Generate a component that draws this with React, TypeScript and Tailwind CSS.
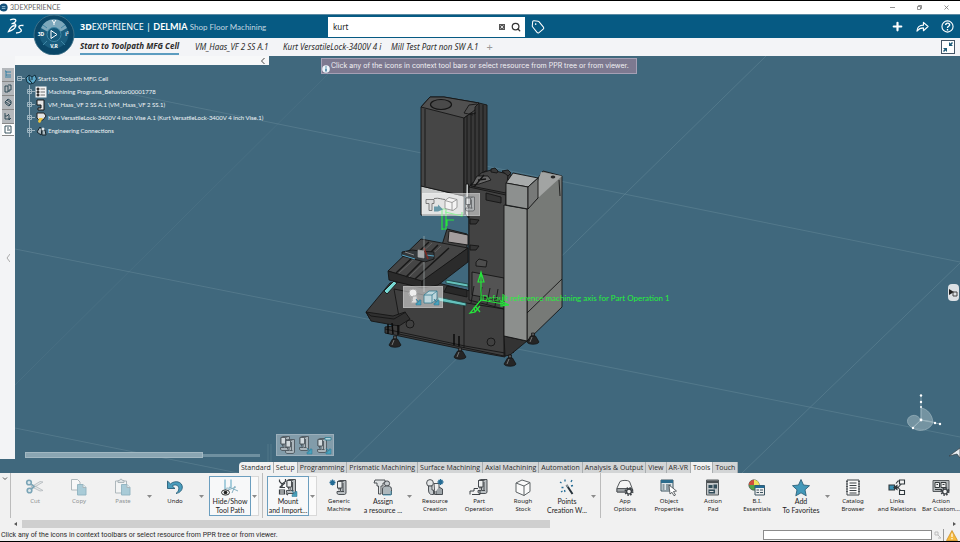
import React from "react";
import { Plus, Tag, Search } from "lucide-react";

type IconName =
  | "cut" | "copy" | "paste" | "undo" | "path" | "mount" | "generic" | "assign" | "resource"
  | "part" | "rough" | "points" | "app" | "object" | "pad" | "bi" | "star" | "catalog" | "links" | "bar";

const Machine = ({ x = 0, y = 0 }: { x?: number; y?: number }) => (
  <g transform={`translate(${x} ${y})`} stroke="#3d4246" strokeWidth=".9" strokeLinejoin="round">
    <path d="M1 1.500 3 .5h6.500v13l-1.500 1H2l-1.500-1v-2H4V8H1z" fill="#b9bec1" />
    <path d="M1 1.500h4.500V8H1zM5.500 1.500 7.500.8" fill="#eceeef" />
    <path d="M6.500 3v9M4.500 11.500h3" fill="none" />
    <path d="M2.500 8v2.500" fill="none" />
  </g>
);

const Gear = ({ x, y }: { x: number; y: number }) => (
  <g transform={`translate(${x} ${y})`}>
    <circle r="3.600" fill="none" stroke="#3c4145" strokeWidth="1.800" strokeDasharray="1.500 1.330" />
    <circle r="2.400" fill="#f1f1f1" stroke="#3c4145" strokeWidth="1.400" />
  </g>
);

const Spark = ({ x, y }: { x: number; y: number }) => (
  <path transform={`translate(${x} ${y})`} d="M0-3V3M-3 0H3M-2-2 2 2M2-2-2 2" stroke="#246b94" strokeWidth="1.300" />
);

const DownArrow = ({ x, y }: { x: number; y: number }) => (
  <path transform={`translate(${x} ${y})`} d="M0 0 3 3V1h2v5H0V4h2z" fill="#4aa3bd" stroke="#28718c" strokeWidth=".5" />
);

const icons: Record<IconName, React.ReactNode> = {
  cut: (
    <g strokeWidth="1.200">
      <path d="M6.500 6 18 12.500l-3 .5-9-4.500zM6.500 11 18 4l-3-.5-9 5.500z" fill="#e4e7e8" stroke="#b3b9bc" strokeWidth=".8" />
      <g fill="#dfe9ed" stroke="#7ba5b7" strokeWidth="1.600">
        <circle cx="4" cy="4.500" r="2.300" />
        <circle cx="4.500" cy="12.500" r="2.300" />
        <path d="m6 6 3 2.500L6.500 11" fill="none" />
      </g>
    </g>
  ),
  copy: (
    <g stroke="#a6b1b6" strokeWidth=".9">
      <path d="M2.500 1.500h6l2.500 2.500v8H2.500z" fill="#f7f8f8" />
      <path d="M8.500 6.500h5.500l3 3v7.500H8.500z" fill="#a9cbd7" stroke="#8fb2c0" />
      <path d="M14 6.500v3h3" fill="#e6f0f3" />
    </g>
  ),
  paste: (
    <g stroke="#a6b1b6" strokeWidth=".9">
      <path d="M2.500 3h11v12h-11z" fill="#f3f4f4" />
      <path d="M5 4.500V2.500h1.500c0-1.800 3-1.800 3 0H11v2z" fill="#dfe3e5" />
      <path d="M8.500 6.500h5.500l3 3v7.500H8.500z" fill="#a9cbd7" stroke="#8fb2c0" />
      <path d="M14 6.500v3h3" fill="#e6f0f3" />
    </g>
  ),
  undo: (
    <path d="M2.500 3v7.500H10L7.300 8C10 5.800 13.800 7.200 13.800 10.500c0 2.200-1 3.500-2.800 5 4-.7 6.300-3.300 6.300-6.400 0-5.400-7.300-7.200-11.800-3.200z" fill="#4a9dbd" stroke="#285f79" strokeWidth=".9" strokeLinejoin="round" />
  ),
  path: (
    <g fill="none" strokeWidth="1">
      <path d="M5 1.500v10M11 1.500v8" stroke="#57a3c0" />
      <path d="M5 12c2-4 4 0 6-3M8 12l8-3M9 9l9 4M12 15l3-7" stroke="#86b2c3" />
      <ellipse cx="5.500" cy="14.500" rx="4" ry="2.600" fill="#eee" stroke="#333" />
      <circle cx="5.500" cy="14.500" r="1.800" fill="#222" />
    </g>
  ),
  mount: (
    <>
      <Machine x={8} y={1} />
      <g fill="none" stroke="#3d4246" strokeWidth="1.200">
        <path d="M1.500 1.500v2L4 6v3.500M7.500 1v2.500L4 6M2 9.500h5M1.500 12h5v4h-5zM1.500 14h5M8 15.500l2 1.500" />
        <path d="M1.500 9.500 7 5" />
      </g>
      <DownArrow x={14} y={12.500} />
    </>
  ),
  generic: <><Machine x={7.500} y={2} /><Spark x={3.500} y={4.500} /></>,
  assign: (
    <g stroke="#3d4246" strokeWidth=".9" strokeLinejoin="round">
      <path d="M2 2h10v3h-2v3H8v8H5.500V8H4V5H1z" fill="#dfe2e3" />
      <circle cx="14" cy="5.500" r="2.600" fill="#c7cccf" />
      <path d="M9.500 16.500V11c0-2 1.500-3 4-3h1.500c2.500 0 3.500 1.500 3.500 3.500v5z" fill="#aeb7bb" />
      <path d="M10 17h8v-4" stroke="#4a9dbd" fill="none" />
    </g>
  ),
  resource: (
    <g stroke="#3d4246" strokeWidth=".9">
      <circle cx="5" cy="5" r="3.400" fill="#e5e7e8" />
      <path d="M3.500 8v4c0 3 1.500 4.500 3 4.500h2V12H7V8z" fill="#c4c9cc" />
      <path d="M9 5.500h5v11H9.500v-4z" fill="#eee" />
      <path d="m14 9 3.500 2v5.500H11V13" fill="#9ea5a9" />
      <Spark x={15.5} y={4} />
    </g>
  ),
  part: (
    <><Machine x={8.500} y={1} /><path d="M1 16.500V13h4v-2.500h4M3 16.500h8V13" fill="none" stroke="#3d4246" /></>
  ),
  rough: (
    <path d="m3 5 6-3 8 2.500v9L11 17.500 3 14zM3 5l8 3v9.500M11 8l6-3.500" fill="#fafafa" stroke="#5d6265" strokeWidth="1" strokeLinejoin="round" />
  ),
  points: (
    <g>
      <path d="m9.500 7 6 9" stroke="#26323a" strokeWidth="2" />
      <path d="m9.500 7 1.500 2" stroke="#8b969c" strokeWidth="2" />
      <path d="M8 1.500v2M3 4l1.500 1M15 2l-1 2M4.500 9.500h2M4 14l1.500-1M16 7.500l-2 .5M7.500 12l.5 2" stroke="#246b94" strokeWidth="1.300" />
    </g>
  ),
  app: (
    <><path d="M2 10 5 3.500C7 2 13 2 14.500 3.500L17 10v4H2z" fill="#f5f5f5" stroke="#55595c" />
      <path d="M2 10.500h15V14H2z" fill="#9da2a5" stroke="#55595c" /><Gear x={14} y={13.500} /></>
  ),
  object: (
    <g>
      <path d="M2 2h12v11H2z" fill="#dce3e6" stroke="#3d5561" />
      <path d="M2 2h12v3H2z" fill="#2d6c8c" />
      <path d="M3.500 7h2M7 7h5M3.500 9h2M7 9h4M3.500 11h2M7 11h3" stroke="#3d5561" />
      <path d="m10 7 7.500 6-3 .5 2 3.500-1.500.8-2-3.500L11 16z" fill="#fff" stroke="#3d4246" strokeWidth=".8" />
    </g>
  ),
  pad: (
    <g>
      <path d="M3.500 2h12v15h-12z" fill="#c3c7c9" stroke="#555a5d" />
      <path d="M4 2.500h11V5H4z" fill="#4a4f52" />
      <path d="M5.500 7h4v3h-4zM10.500 6.500h3.500v4h-3.500zM5.500 11.500h6.500v4H5.500z" fill="#334d5a" />
      <path d="M6.500 13.500h4" stroke="#ddd" />
    </g>
  ),
  bi: (
    <g>
      <circle cx="7" cy="7" r="5.200" fill="#51a447" stroke="#4b5559" strokeWidth=".7" />
      <path d="M7 7V1.800A5.200 5.200 0 0 1 12.200 7z" fill="#eee25c" />
      <path d="M7 7H1.800A5.200 5.200 0 0 1 7 1.800z" fill="#cf4d3d" />
      <path d="M8 7.500h9.500v9.500H8z" fill="#eee" stroke="#3d5561" />
      <path d="M8 7.500h9.500V10H8z" fill="#246b94" />
      <path d="M9.500 12H12M13 12h3M9.500 14.500H12M13 14.500h3" stroke="#3d5561" strokeWidth="1.200" />
    </g>
  ),
  star: (
    <path d="m10 1.500 2.500 5.500 6 .7-4.500 4.100 1.200 6L10 14.800l-5.200 3 1.200-6L1.500 7.700l6-.7z" fill="#4399ba" stroke="#2d627b" strokeWidth=".9" />
  ),
  catalog: (
    <g stroke="#3d4246">
      <path d="M4 2h12v15H4z" fill="#fafafa" />
      <path d="M3 3.500h2M3 6h2M3 8.500h2M3 11h2M3 13.500h2M15 3.500h2M15 6h2M15 8.500h2M15 11h2M15 13.500h2" strokeWidth=".8" />
      <path d="M6.500 5h7M6.500 7.500h7M6.500 10h7M6.500 12.500h7M6.500 15h7" />
    </g>
  ),
  links: (
    <g fill="none" stroke="#30383c" strokeWidth="1.100">
      <path d="M7 9.500h4L16 4M11 9.500l4 4.500M9 5.500 11 3h2" />
      <path d="M2 7h5.500v5H2z" fill="#398eb0" />
      <path d="M12.500 2h5v4h-5zM12.500 12.500h5v4h-5z" fill="#f5f5f5" />
      <path d="m7 9.500 3-2v4z" fill="#30383c" />
    </g>
  ),
  bar: (
    <><path d="M2 2.500h16v11H2z" fill="#b5b9bb" stroke="#55595c" />
      <path d="M4 4.500h4.500v5H4zM10 4.500h5v5h-5z" fill="#eee" stroke="#33383b" />
      <path d="M5.500 6.500h1.500M11.500 6.500h2M4 11.500h7" stroke="#33383b" /><Gear x={14} y={13.500} /></>
  ),
};

type Item = { icon: IconName; label: [string, string?]; menu?: boolean; off?: boolean; boxed?: boolean; end?: boolean };

const items: Item[] = [
  { icon: "cut", label: ["Cut"], off: true },
  { icon: "copy", label: ["Copy"], off: true },
  { icon: "paste", label: ["Paste"], off: true, menu: true },
  { icon: "undo", label: ["Undo"], menu: true },
  { icon: "path", label: ["Hide/Show", "Tool Path"], menu: true, boxed: true, end: true },
  { icon: "mount", label: ["Mount", "and Import..."], menu: true, boxed: true },
  { icon: "generic", label: ["Generic", "Machine"] },
  { icon: "assign", label: ["Assign", "a resource ..."], menu: true },
  { icon: "resource", label: ["Resource", "Creation"] },
  { icon: "part", label: ["Part", "Operation"] },
  { icon: "rough", label: ["Rough", "Stock"] },
  { icon: "points", label: ["Points", "Creation W..."], menu: true, end: true },
  { icon: "app", label: ["App", "Options"] },
  { icon: "object", label: ["Object", "Properties"] },
  { icon: "pad", label: ["Action", "Pad"] },
  { icon: "bi", label: ["B.I.", "Essentials"] },
  { icon: "star", label: ["Add", "To Favorites"], menu: true },
  { icon: "catalog", label: ["Catalog", "Browser"] },
  { icon: "links", label: ["Links", "and Relations"] },
  { icon: "bar", label: ["Action", "Bar Custom..."] },
];

function RibbonItem({ item }: { item: Item }) {
  const tall = item.menu && item.label[1];
  return (
    <>
      <div className={`flex shrink-0 ${item.boxed ? "pl-1" : ""}`}>
        <button
          className={`flex h-10 flex-col items-center border pt-px whitespace-nowrap ${item.boxed ? "w-[42px] border-[#6b9ebf] bg-[#f7f8f9]" : "w-11 border-transparent"} ${item.off ? "text-[#8f9395]" : "text-[#222]"}`}
        >
          <svg viewBox="0 0 20 19" className="h-[19px] w-5 shrink-0">{icons[item.icon]}</svg>
          <span className={`flex flex-col ${tall ? "font-['Lato',sans-serif] text-[7px] leading-[9px]" : "text-[6px] leading-[8px]"}`}>
            {item.label.map((l) => <span key={l}>{l}</span>)}
          </span>
        </button>
        {item.menu && (
          <button aria-label={`${item.label[0]} options`} className={`flex h-10 w-2 items-center justify-center ${item.boxed ? "border-y border-r border-[#d8d8d8] bg-[#fafafa]" : ""}`}>
            <svg viewBox="0 0 5 3" className="h-[3px] w-[5px]"><path d="M0 0h5L2.500 3z" fill="#8b8b8b" /></svg>
          </button>
        )}
      </div>
      {item.end && <div className={`ml-[3px] h-[45px] w-px shrink-0 self-start bg-[#bcbcbc] ${item.boxed ? "" : "mr-0.5"}`} />}
    </>
  );
}

const sections = ["Standard", "Setup", "Programming", "Prismatic Machining", "Surface Machining", "Axial Machining", "Automation", "Analysis & Output", "View", "AR-VR", "Tools", "Touch"];
const lit = ["Standard", "Setup", "Tools"];

const Foot = ({ x, y }: { x: number; y: number }) => (
  <g transform={`translate(${x} ${y})`} stroke="#111" strokeWidth=".7">
    <path d="M-1.500-7h3v3h-3z" fill="#555" />
    <path d="M-2.500-4h5L6 2C5 5-5 5-6 2z" fill="#252525" />
    <path d="M-1-3-3 2" stroke="#999" />
  </g>
);

function Scene() {
  return (
    <svg viewBox="0 56 960 417" preserveAspectRatio="xMidYMid slice" className="absolute inset-0 h-full w-full" role="img" aria-label="Milling machine">
      <g stroke="#6d909f" strokeWidth=".7" opacity=".8">
        <path d="M130 94 960 262M15 249 960 437M15 428 238 473M766 56 340 473M960 263 742 473M268 444v30M271 444v30" fill="none" strokeOpacity=".75" />
        <path d="M340 62 15 385" strokeOpacity=".35" />
      </g>
      <g stroke="#151515" strokeWidth=".9" strokeLinejoin="round">
        {/* base and tray */}
        <path d="m366 312 24-29 32-4 48 12 35 6v60l-39-7-81-17v-6l8-1 2-8-25 1z" fill="#3d3d3d" />
        <path d="m394 289 60 12 50 8v47l-105-22V317z" fill="#404040" />
        <path d="m366 312 27 4 12-4 5 7-11 7-28-5z" fill="#303030" />
        <path d="m366 312 5 4 23 3 12-7M385 329l80 17 40 7 20-15" fill="none" />
        <path d="m384 291 10-10 3 2-10 11z" fill="#78d9d4" />
        <path d="m446 280 22 4v3l-22-4zM438 297l28 6v3l-28-5z" fill="#65c2bd" stroke="#214846" />
        <path d="m447 286 20 4v7l-23-5z" fill="#282828" />
        <path d="M464 306v42" fill="none" />
        <circle cx="410" cy="324" r="4" fill="none" />
        <circle cx="491" cy="342" r="4" fill="none" />
        <path d="M388 324v10M398 325v10M392 323l1 11M454 334v11M459 336v10M506 344l5 12M514 343l-1 10" stroke="#080808" strokeWidth="1.400" fill="none" />
        <path d="m504 336 23 5-17 14-5 1z" fill="#333" />
        {/* table */}
        <path d="m447 229 20 5v24l-14 1-11-14z" fill="#444" />
        <path d="m449 231 19 4v10l-20-3z" fill="#a49e9e" />
        <path d="m388 271 33-32 47 9-46 34z" fill="#454545" />
        <path d="m388 271 34 10v7l-33-8zM422 281l46-33v14l-30 23-16 3z" fill="#2b2b2b" />
        <path d="m396 273 33-31M406 277l32-32M415 279l34-31" stroke="#181818" strokeWidth="1.500" />
        <path d="m399 273 33-30M409 277l32-31" stroke="#747474" strokeWidth=".6" />
        <path d="m402 252 10-2 8 1 14 1v7l-9 3-23-6z" fill="#34393c" />
        <path d="m405 252 9 3M418 250l6 1v7l-6-1z" stroke="#aaa" strokeWidth=".7" fill="#a8aaab" />
        <path d="m402 255 13 4M426 255l8 1" stroke="#54a3c4" strokeWidth="1" />
        <path d="m424 248 4 11" stroke="#7c2a22" strokeWidth="1.500" />
        <path d="M424 236v15M424 262v30" stroke="#b0b8bb" strokeWidth=".6" />
        {/* spindle head */}
        <path d="m421 186 43 10v19h-43z" fill="#c6c8c8" />
        <path d="m421 107 9-10 14 0 35 6-4 11-11 4v78l-43-10z" fill="#464646" />
        <path d="m421 107 43 11 11-8 4-7-35-6h-14z" fill="#505050" />
        <path d="M464 118 471 113l4 1v-7l4-4 8 2v67l-16 12-7 12z" fill="#383838" />
        <path d="M425 109v77M467 116v77M471 113v74M475 112v72M479 104v74M483 105v70" />
        <ellipse cx="441" cy="104.500" rx="10.500" ry="5" fill="#4a4a4a" strokeWidth="1.200" />
        <path d="m464 113 5-8 8-1M464 113l9 2" fill="none" />
        {/* column */}
        <path d="m469 187 16-16 20 2 9 3-8 28-2 105-35-18z" fill="#383838" />
        <path d="m469 187 37 8-2 114-35-9z" fill="#434343" />
        <path d="m471 186 10-13 10-3 17 4-2 19z" fill="#444" />
        <path d="m472 185 5-9h11l3 4-12 4z" fill="#686868" />
        <path d="m491 169 4-1 3 3-1 2-6-1zM502 171l6-1 3 3-3 3z" fill="#3a3a3a" />
        <path d="m474 187 10-12M478 180l8-1" fill="none" strokeWidth="1.300" />
        <path d="m486 193 15 4v6l-15-3zM470 219l9 1-3 4h-6zM470 245l9 1-3 4h-6z" fill="#343434" />
        <path d="m476 262 3-3 8 2-1 6-10-1z" fill="#4d4d4d" />
        <path d="m472 272 32 6v23l-32-6z" fill="#535353" />
        <path d="m474 286-3 17M482 287l-3 17M490 288l-3 16M498 289l-3 17" fill="none" />
        <path d="M466 184h2.500v34l-3-4z" fill="#bfc3c3" />
        {/* control cabinet */}
        <path d="m527 209 11-11v-20l5-7 19 5v131l-35 34z" fill="#777a77" />
        <path d="m538 181 3-9 21 4-24 22z" fill="#a2a4a3" stroke="none" />
        <path d="m504 205 23 4v132l-23-5z" fill="#8c8f8d" />
        <path d="m506 183 7-10 25 5-10 9z" fill="#a8abab" />
        <path d="m506 183 22 4v22l-22-4z" fill="#8d908f" />
        <path d="m528 187 10-9v20l-10 11z" fill="#777978" />
        <path d="m527 313 35-34M559 180l1 16" fill="none" />
        <ellipse cx="553" cy="177" rx="2" ry="1" fill="#333" />
      </g>
      <Foot x={395} y={343} /><Foot x={460} y={355} /><Foot x={510} y={362} /><Foot x={533} y={340} />
      <g fill="none" stroke="#25e53b" strokeWidth="1.200">
        <path d="M442 209v21M440 209h6v20h-4M447 226v-6h7M445 212l17 4v-4" />
        <path d="M481 300v-28m-3 10 3-10 3 10zM481 300l-11 13 5-1-1-5M481 300l28 5-8-4v5l8-1M503 294v12M475 306l5 6M480 306l-5 6" />
      </g>
      <text x="482" y="301" fill="#25ef3b" fontSize="8" className="font-['Lato',sans-serif]">Default reference machining axis for Part Operation 1</text>
      {/* orientation robot */}
      <g stroke="#9cb4bf" strokeWidth=".7" fill="#a8bdc6" fillOpacity=".5">
        <path d="M921 420v-12c7 1 11 7 12 14zM921 420l-8 8c-7-3-7-10-2-12 5-2 8 1 10 4zM921 420l12 2c-2 8-14 11-20 6z" />
        <path d="M921 396v24l19 4M921 420l-9 8" fill="none" />
        <g fill="#fff" fillOpacity="1" stroke="none"><circle cx="921" cy="395.500" r="1.200" /><circle cx="921" cy="402" r="1.200" /><circle cx="921" cy="407" r="1" /><circle cx="921" cy="420" r="1.400" /><circle cx="935" cy="423" r="1.200" /><circle cx="940" cy="424" r="1.200" /><circle cx="913" cy="428" r="1.200" /></g>
      </g>
      <path d="m949 456 11-8v10l-3-4z" fill="#e9edf0" stroke="#343e44" strokeWidth=".7" />
    </svg>
  );
}

const TreeGlyph = ({ kind }: { kind: number }) => (
  <svg viewBox="0 0 12 12" className="h-3 w-3 shrink-0">
    {kind === 0 && <path d="m1 5 3-3 3 2 3-2 1.500 4L9 10l-4 1-3-2zM4 2v5l3 3M7 4v3" fill="#5aa6c7" stroke="#132f3d" />}
    {kind === 1 && <><path d="M.5.500h11v11H.500z" fill="#f4f4f4" /><path d="M2 2h2v2H2zM2 5h2v2H2zM2 8h2v2H2zM5.500 3H10M5.500 6H10M5.500 9H10" fill="#333" stroke="#333" strokeWidth=".7" /></>}
    {kind === 2 && <path d="M2 1h7v10H3V9h3V6H2z" fill="#e5e5e5" stroke="#161616" />}
    {kind === 3 && <><path d="M2 1h7l2 3-3 4H4L2 6z" fill="#e2e4e4" stroke="#222" /><path d="M4 6h4l-3 5-2-1z" fill="#eac43f" /></>}
    {kind === 4 && <><path d="m2 7 3-5 2 3-1 5zM7 5h3l1 5H7z" fill="#aab8bf" stroke="#17242c" /><circle cx="8" cy="4" r="1.500" fill="#e0e7ea" /></>}
  </svg>
);

const tree = [
  "Start to Toolpath MFG Cell",
  "Machining Programs_Behavior00001778",
  "VM_Haas_VF 2 SS A.1 (VM_Haas_VF 2 SS.1)",
  "Kurt VersatileLock-3400V 4 inch Vise A.1 (Kurt VersatileLock-3400V 4 inch Vise.1)",
  "Engineering Connections",
];

const sideIcons = [
  <path key="a" d="M1 1h1v7M2 2h5M2 5h5M3 7h4" stroke="#2b7ba3" />,
  <path key="b" d="M1 2h3v6H1zM4 1h3v5H5v2" />,
  <path key="c" d="m1 4 3-3 3 2v3L5 8 2 6zM2 4l4 3M3 2l4 3" />,
  <path key="d" d="M1 1v6h5M1 4h2l2-2M5 3v5l2-2" />,
  <path key="e" d="M1 1h6v7H1zM3 3h2M3 5h3" />,
];

const Mini = ({ className, children, width }: { className: string; children: React.ReactNode; width: number }) => (
  <div className={`absolute border border-white/20 ${className}`}>
    <svg viewBox={`0 0 ${width} 20`} className="h-full w-full">{children}</svg>
  </div>
);

export default function App() {
  return (
    <div className="flex h-screen flex-col overflow-hidden border-y border-black bg-[#f1f1f1] font-['Noto_Sans','Open_Sans',sans-serif] text-[#2b2b2b]">
      <div className="flex h-[13px] shrink-0 items-center bg-white text-[7px] text-[#666]">
        <svg viewBox="0 0 10 10" className="mr-px h-[9px] w-[9px]"><circle cx="4" cy="5" r="4.500" fill="#13507a" /><path d="M2 4h4M2 6h4" stroke="#9bc6dc" /></svg>
        <span className="grow font-['Lato',sans-serif]">3DEXPERIENCE</span>
        <div className="flex gap-[22px] pr-[11px]">
          {["M0 2.500h5", "M.5 1.500h3v3h-3zM1.500 1.500v-1h3v3h-1", "m.5.500 4 4m0-4-4 4"].map((d, i) => (
            <button key={d} aria-label={["Minimize", "Restore", "Close"][i]} className="h-[5px] w-[5px]">
              <svg viewBox="0 0 5 5" className="h-[5px] w-[5px]"><path d={d} fill="none" stroke="#777" strokeWidth=".8" /></svg>
            </button>
          ))}
        </div>
      </div>

      <header className="relative flex h-6 shrink-0 items-center border-t border-[#5c8aa2] bg-[#065a83] pr-1.5 text-white">
        <svg viewBox="0 0 18 17" className="ml-[7px] h-[17px] w-[18px]" fill="none" stroke="#fff" strokeWidth="1.300">
          <path d="M3 2c4-2 8-.5 4.500 2.500L4.500 6M6 5.500c5 0 3 6-4.500 8C3.500 9 6 7 8 8M16.500 7.500c-4-.8-6 1-3.500 3s1.500 4-4 4.500" />
        </svg>
        <div className="absolute top-0 left-[33px] z-10 h-10 w-[42px]">
          <svg viewBox="0 0 42 40" className="h-full w-full">
            <circle cx="21" cy="20" r="20" fill="#0a4768" stroke="#49788e" strokeWidth=".8" />
            <circle cx="21" cy="19" r="14.500" fill="#195d7e" />
            <path d="M8 13a14 14 0 0 1 26 0l-7 4a7 7 0 0 0-12 0z" fill="#7da8bc" />
            <circle cx="21" cy="19.500" r="7" fill="#14597a" stroke="#3f86a5" />
            <path d="m18 15.500 6 4-6 4z" fill="none" stroke="#fff" />
            <path d="m14 13-4-3M28 13l4-3M14 26l-4 4M28 26l4 4" stroke="#3f86a5" />
            <g fill="#fff" fontSize="5" fontWeight="700" textAnchor="middle"><text x="8" y="21">3D</text><text x="34" y="21">i²</text><text x="21" y="33">V,R</text></g>
            <path d="m19 5 2 3v2m2-5-2 3" stroke="#fff" fill="none" />
          </svg>
        </div>
        <h1 className="ml-[55px] w-[248px] text-[9px] whitespace-nowrap"><b>3D</b>EXPERIENCE | <span className="font-['Lato',sans-serif] font-bold">DELMIA</span> <span className="font-['Lato',sans-serif] text-[8px] text-[#c3d7e1]">Shop Floor Machining</span></h1>
        <label className="flex h-5 w-[197px] items-center bg-white pr-1">
          <input aria-label="Search" defaultValue="kurt" className="w-0 grow px-[5px] text-[8px] text-[#222] outline-none" />
          <button aria-label="Clear" className="mr-1.5 flex h-1.5 w-1.5 items-center justify-center bg-[#555]">
            <svg viewBox="0 0 6 6" className="h-1.5 w-1.5"><path d="m1.500 1.500 3 3m0-3-3 3" stroke="#fff" strokeWidth=".8" /></svg>
          </button>
          <Search size={10} strokeWidth={3} color="#333" />
        </label>
        <button aria-label="Tags" className="ml-1.5"><Tag size={14} strokeWidth={1.800} className="rotate-6" /></button>
        <div className="ml-auto flex items-center gap-3">
          <button aria-label="Add"><Plus size={13} strokeWidth={4} /></button>
          <button aria-label="Share"><svg viewBox="0 0 14 12" className="h-3 w-[13px]"><path d="M1 10.500C1 6 4 4 8 4V1l5 4.500L8 10V7C5 7 3 8 1 10.500z" fill="none" stroke="#fff" strokeWidth="1.200" strokeLinejoin="round" /></svg></button>
          <button aria-label="Help"><svg viewBox="0 0 14 14" className="h-[13px] w-[13px]"><circle cx="7" cy="7" r="6" fill="none" stroke="#fff" strokeWidth="1.200" /><path d="M5 5.500c0-3 4.300-2.500 4.300-.2C9.300 7 7 6.500 7 8.500M7 9.800v1.500" fill="none" stroke="#fff" strokeWidth="1.500" /></svg></button>
        </div>
      </header>

      <nav className="flex h-[18px] shrink-0 items-stretch bg-[#f3f4f7] pr-[5px] pl-20 text-[8px] leading-[16px] whitespace-nowrap italic">
        <button className="h-[17px] w-[99px] border-b-2 border-[#5c9cc0] text-center font-bold italic">Start to Toolpath MFG Cell</button>
        <button className="ml-4 w-[88px] text-left italic">VM_Haas_VF 2 SS A.1</button>
        <button className="w-[108px] text-left italic">Kurt VersatileLock-3400V 4 i</button>
        <button className="text-left italic">Mill Test Part non SW A.1</button>
        <button aria-label="New tab" className="ml-2 text-[11px] text-[#999] not-italic">+</button>
        <button aria-label="Exit full view" className="mt-0.5 ml-auto h-[14px] w-[14px] border border-[#456] bg-white">
          <svg viewBox="0 0 12 12" className="h-3 w-3"><path d="M7 1v4h4L9.500 3.500 11 2l-1-1-1.500 1.500zM5 11V7H1l1.500 1.500L1 10l1 1 1.500-1.500z" fill="#1b5a78" /></svg>
        </button>
      </nav>

      <main className="relative flex min-h-0 grow overflow-hidden bg-[#40687d]">
        <Scene />
        <aside className="relative mb-[14px] flex w-[15px] shrink-0 flex-col items-center bg-[#f3f4f6] pt-3">
          {sideIcons.map((p, i) => (
            <button key={i} aria-label={["Tree", "Resources", "Processes", "Simulation", "Structure"][i]} className={`flex w-3 items-center justify-center border-b border-[#888] ${i === 4 ? "h-3 bg-white" : "h-[14px] bg-[#b4b8bc]"}`}>
              <svg viewBox="0 0 8 9" className="h-[9px] w-2" fill="none" stroke="#25414f" strokeWidth=".9">{p}</svg>
            </button>
          ))}
          <button aria-label="Collapse panel" className="mt-[118px]"><svg viewBox="0 0 4 8" className="h-2 w-1"><path d="M4 0 1 4l3 4" fill="none" stroke="#aaa" /></svg></button>
        </aside>
        <section className="relative flex w-[254px] flex-col">
          <div className="flex h-[9px] justify-end bg-[#f7f8f9] pr-1"><svg viewBox="0 0 4 6" className="mt-0.5 h-1.5 w-1"><path d="M3.500 0 .5 3l3 3" fill="none" stroke="#444" /></svg></div>
          <ul className="mt-[7px] font-['Lato',sans-serif] text-[6px] leading-3 whitespace-nowrap text-[#f1f5f7]">
            {tree.map((t, i) => (
              <li key={t} className={`flex h-[13px] items-center ${i ? "pl-3" : "pl-0.5"}`}>
                <svg viewBox="0 0 8 13" className="h-[13px] w-2 shrink-0" fill="none" stroke="#b4c7d0" strokeWidth=".8"><path d={`M.5 4.500h4v4h-4zM1 6.500h3M5 6.500h3${i ? "M2.500 0v4M2.500 9v4M2.500 5v3" : ""}`} /></svg>
                <TreeGlyph kind={i} />
                <span className="ml-px">{t}</span>
              </li>
            ))}
          </ul>
          <div className="mt-auto mb-[15px] ml-2.5 flex h-1.5 w-[235px] items-center"><div className="h-1.5 w-[178px] border border-[#a2b8c2] bg-[#8aa5b2]" /><div className="h-[3px] grow bg-[#6f90a0]" /></div>
        </section>

        <div className="absolute top-0.5 left-[321px] flex h-4 w-[316px] items-center border border-[#a5a0b5] bg-[#7d7990] font-['Inter',sans-serif] text-[7px] leading-3 whitespace-nowrap text-[#f1f0f4]">
          <svg viewBox="0 0 8 8" className="h-2 w-2 shrink-0 self-end"><circle cx="4" cy="4" r="3.800" fill="#eef5fa" /><path d="M4 1.500v1M4 3.500v3" stroke="#17628a" strokeWidth="1.300" /></svg>
          <span className="ml-px">Click any of the icons in context tool bars or select resource from PPR tree or from viewer.</span>
        </div>
        <Mini className="top-[137px] left-[422px] h-[23px] w-[58px] bg-white/50" width={56}>
          <path d="M3 5h8v4H9v7H6V9H3z" fill="#ddd" stroke="#666" strokeWidth=".8" /><path d="M11 4c5-1 8 1 11 1" stroke="#777" fill="none" /><path d="M11 12h4v-2l5 5-5 2H11z" fill="#5b91a3" opacity=".9" /><path d="m22 6 4-3 8 2v8l-4 3-8-2zM22 6l7 2v8M29 8l5-3" fill="#f4f4f4" stroke="#888" strokeWidth=".8" />
          <g opacity=".6"><Machine x={42} y={2} /></g>
        </Mini>
        <Mini className="top-[230px] left-[403px] h-[22px] w-10 bg-white/50" width={38}>
          <circle cx="9" cy="6" r="4" fill="#eee" stroke="#aaa" /><path d="M4 6c2 0 3 7 5 8M9 9h4v7H7z" fill="#ddd" stroke="#aaa" /><DownArrow x={12} y={12} /><path d="m20 8 5-4h8v8l-5 4h-8zM20 8h8v8M28 8l5-4" fill="#bed6dc" stroke="#357b91" strokeWidth=".8" /><DownArrow x={30} y={12} />
        </Mini>
        <Mini className="top-[378px] left-[276px] h-[22px] w-[58px] bg-white/35" width={56}>
          <g opacity=".75"><Machine x={3} y={1} /><Machine x={8} y={4} /><Machine x={22} y={1} /><Machine x={40} y={3} /></g>
          <DownArrow x={30} y={13} /><path d="M48 2.500h6v2.500h-6z" stroke="#297b91" fill="#b8d5de" strokeWidth=".8" /><DownArrow x={49} y={13} />
        </Mini>
        <button aria-label="Show panel" className="absolute top-[228px] right-px flex h-[17px] w-[11px] items-center justify-center rounded-sm bg-[#dce1e5]"><svg viewBox="0 0 9 8" className="h-2 w-[9px]"><path d="M0 0 5 3 0 6z" fill="#222" /><path d="M4 3h4v4H4z" fill="none" stroke="#444" /></svg></button>

        <div className="absolute bottom-0 left-[239px] flex h-[11px] font-['Open_Sans',sans-serif] text-[7px] leading-[11px] whitespace-nowrap">
          {sections.map((s) => (
            <button key={s} className={`border-r border-[#a9adaf] px-[2px] ${lit.includes(s) ? "bg-[#f1f1f1]" : "bg-[#d3d5d6]"} ${s === "Standard" ? "rounded-tl" : ""}`}>{s}</button>
          ))}
        </div>
      </main>

      <div className="flex h-[45px] shrink-0 overflow-hidden bg-[#f1f1f1]">
        <button aria-label="Collapse ribbon" className="flex w-[11px] shrink-0 justify-center border-r border-[#bcbcbc] pt-1"><svg viewBox="0 0 6 4" className="h-1 w-1.5"><path d="m1 .5 2 2 2-2" fill="none" stroke="#555" /></svg></button>
        <div className="flex min-w-0 grow overflow-hidden pl-0.5 [&>div]:pt-[3px]">
          {items.map((it) => <RibbonItem key={it.icon} item={it} />)}
        </div>
      </div>
      <div className="flex h-[11px] shrink-0 items-center px-3.5 pr-1">
        <svg viewBox="0 0 4 4" className="mr-1 h-1 w-1"><path d="M3 0v4L0 2z" fill="#555" /></svg>
        <div className="h-2 w-[56%] bg-[#cfcfcf]" />
        <svg viewBox="0 0 4 4" className="ml-auto h-1 w-1"><path d="M1 0v4l3-2z" fill="#555" /></svg>
      </div>
      <footer className="flex h-3 shrink-0 items-center text-[7px] whitespace-nowrap">
        <span className="grow pl-px font-['Roboto',sans-serif] leading-3">Click any of the icons in context toolbars or select resource from PPR tree or from viewer.</span>
        <input aria-label="Command" className="h-2.5 w-[169px] border border-[#8c8c8c] bg-white px-1 outline-none" />
        <button aria-label="Find" className="flex h-3 w-3 items-center justify-center border-r border-[#999]"><svg viewBox="0 0 8 8" className="h-2 w-2"><path d="M1 1h3v3H1zM4 4l3 3H4" fill="none" stroke="#bbb" /></svg></button>
        <button aria-label="Warnings" className="flex h-3 w-4 items-center justify-center"><svg viewBox="0 0 12 11" className="h-[11px] w-3"><path d="m6 .5 5.500 10H.5z" fill="#f4b93d" stroke="#c8861a" strokeWidth=".7" /><path d="M6 3.500v3.500M6 8v1.200" stroke="#fff" strokeWidth="1.200" /></svg></button>
      </footer>
    </div>
  );
}
